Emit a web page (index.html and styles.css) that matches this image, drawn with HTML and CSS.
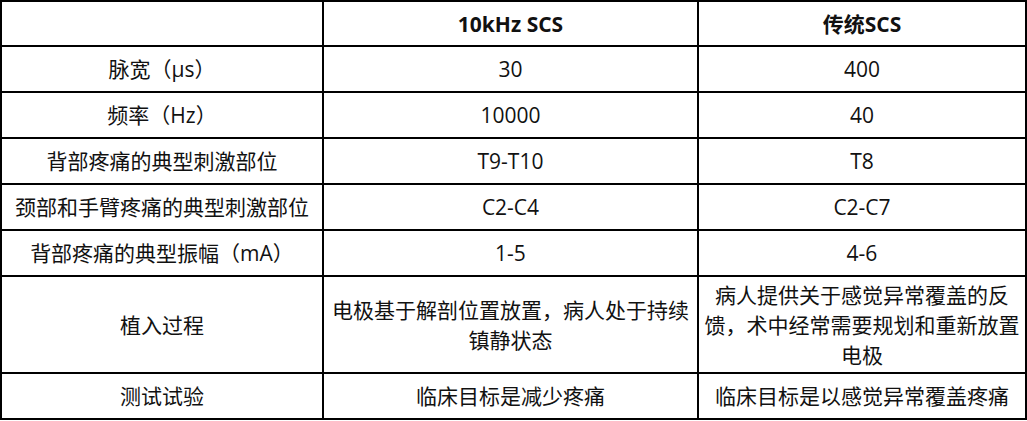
FILE: index.html
```html
<!DOCTYPE html>
<html lang="zh-CN">
<head>
<meta charset="utf-8">
<title>10kHz SCS 与传统SCS对比</title>
<link rel="stylesheet" href="styles.css">
</head>
<body>
<table class="cmp">
  <colgroup>
    <col class="c1">
    <col class="c2">
    <col class="c3">
  </colgroup>
  <thead>
    <tr class="head">
      <th></th>
      <th>10kHz SCS</th>
      <th>传统SCS</th>
    </tr>
  </thead>
  <tbody>
    <tr><td>脉宽（μs）</td><td>30</td><td>400</td></tr>
    <tr><td>频率（Hz）</td><td>10000</td><td>40</td></tr>
    <tr><td>背部疼痛的典型刺激部位</td><td>T9-T10</td><td>T8</td></tr>
    <tr><td>颈部和手臂疼痛的典型刺激部位</td><td>C2-C4</td><td>C2-C7</td></tr>
    <tr><td>背部疼痛的典型振幅（mA）</td><td>1-5</td><td>4-6</td></tr>
    <tr class="tall">
      <td>植入过程</td>
      <td class="nw">电极基于解剖位置放置，病人处于持续<br>镇静状态</td>
      <td class="nw">病人提供关于感觉异常覆盖的反<br>馈，术中经常需要规划和重新放置<br>电极</td>
    </tr>
    <tr><td>测试试验</td><td>临床目标是减少疼痛</td><td>临床目标是以感觉异常覆盖疼痛</td></tr>
  </tbody>
</table>
</body>
</html>
```
FILE: styles.css
```css
html, body {
  margin: 0;
  padding: 0;
  background: #fff;
}

.cmp {
  border-collapse: separate;
  border-spacing: 0;
  table-layout: fixed;
  width: 1027px;
  border-left: 2px solid #000;
  border-top: 2px solid #000;
  font-family: "Open Sans", "Noto Sans CJK SC", sans-serif;
  font-size: 21px;
  line-height: 30px;
  color: #111;
}

.c1 { width: 322px; }
.c2 { width: 375px; }
.c3 { width: 328px; }

.cmp th,
.cmp td {
  border-right: 2px solid #000;
  border-bottom: 2px solid #000;
  padding: 0 4px;
  height: 44px;
  text-align: center;
  vertical-align: middle;
  font-weight: 400;
}

.cmp .head th {
  height: 43px;
  font-weight: 700;
}

.cmp .tall td {
  height: 95px;
}

.cmp .nw {
  white-space: nowrap;
}
```
